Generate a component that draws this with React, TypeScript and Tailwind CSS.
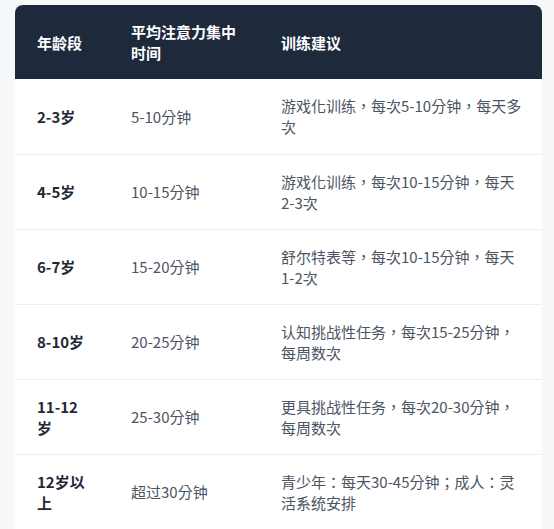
import * as React from 'react';

type Row = { age: string; span: string; advice: string };

const rows: Row[] = [
  { age: '2-3岁', span: '5-10分钟', advice: '游戏化训练，每次5-10分钟，每天多次' },
  { age: '4-5岁', span: '10-15分钟', advice: '游戏化训练，每次10-15分钟，每天2-3次' },
  { age: '6-7岁', span: '15-20分钟', advice: '舒尔特表等，每次10-15分钟，每天1-2次' },
  { age: '8-10岁', span: '20-25分钟', advice: '认知挑战性任务，每次15-25分钟，每周数次' },
  { age: '11-12岁', span: '25-30分钟', advice: '更具挑战性任务，每次20-30分钟，每周数次' },
  { age: '12岁以上', span: '超过30分钟', advice: '青少年：每天30-45分钟；成人：灵活系统安排' },
];

export default function App() {
  return (
    <div
      className="min-h-[529px] bg-[#f7f8fa] pl-[15px] pt-[5px]"
      style={{ fontFamily: '"Noto Sans CJK TC", sans-serif' }}
    >
      <div className="w-[527px] overflow-hidden rounded-t-lg bg-white">
        <table className="w-full table-fixed border-collapse text-[15px] leading-[21px]">
          <colgroup>
            <col className="w-[94px]" />
            <col className="w-[150px]" />
            <col />
          </colgroup>
          <thead>
            <tr className="bg-[#1e293b] text-left text-white">
              <th className="h-[74px] pl-[22px] pr-[22px] py-4 font-bold">年龄段</th>
              <th className="h-[74px] pl-[22px] pr-[18px] py-4 font-bold">平均注意力集中时间</th>
              <th className="h-[74px] pl-[22px] pr-[18px] py-4 font-bold">训练建议</th>
            </tr>
          </thead>
          <tbody>
            {rows.map((r) => (
              <tr key={r.age} className="border-b border-[#eceef1]">
                <td className="h-[75px] pl-[22px] pr-[22px] py-4 font-semibold text-[#1f2937]">{r.age}</td>
                <td className="h-[75px] pl-[22px] pr-[18px] py-4 text-[#4b5563]">{r.span}</td>
                <td className="h-[75px] pl-[22px] pr-[18px] py-4 text-[#4b5563]">{r.advice}</td>
              </tr>
            ))}
          </tbody>
        </table>
      </div>
    </div>
  );
}
